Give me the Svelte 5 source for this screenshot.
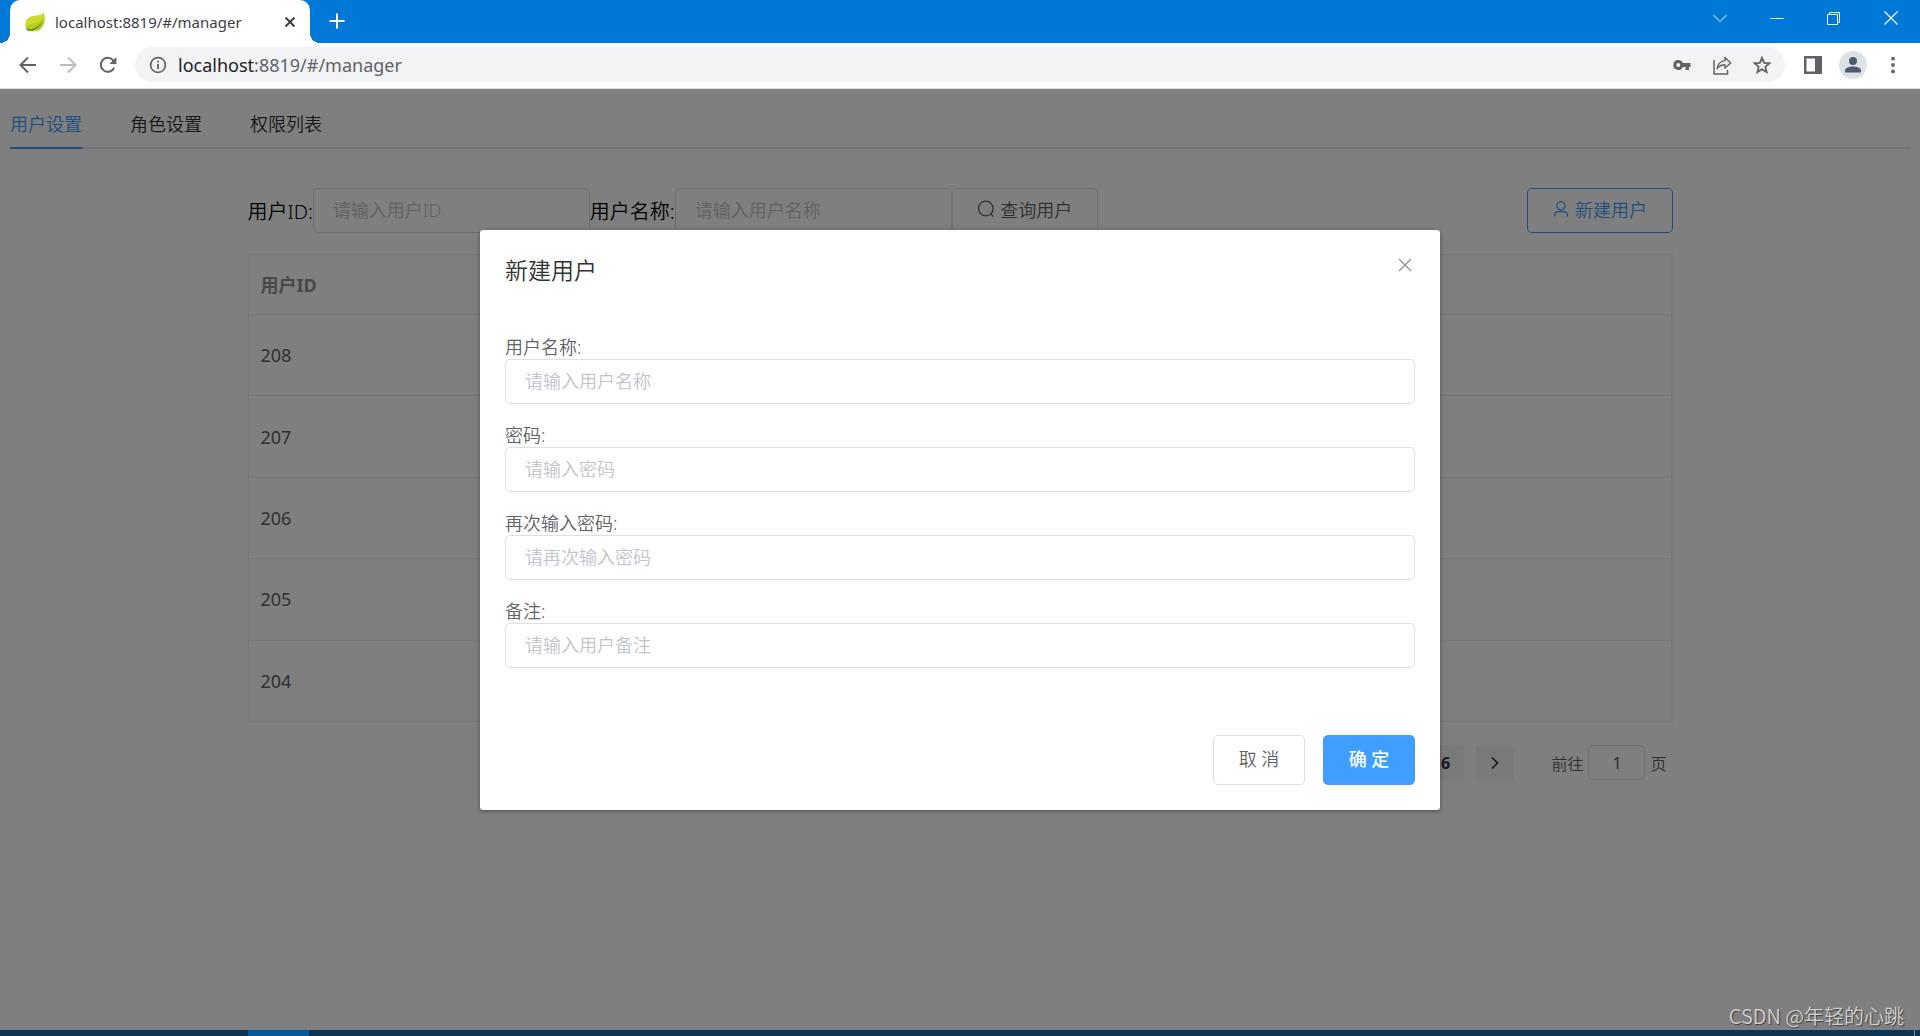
<script>
  const tabs = ['用户设置', '角色设置', '权限列表'];
  const rows = [208, 207, 206, 205, 204];
  const fields = [
    { id: 'name', label: '用户名称:', hint: '请输入用户名称', type: 'text' },
    { id: 'pwd', label: '密码:', hint: '请输入密码', type: 'password' },
    { id: 'pwd2', label: '再次输入密码:', hint: '请再次输入密码', type: 'password' },
    { id: 'remark', label: '备注:', hint: '请输入用户备注', type: 'text' }
  ];
  let active = $state(0);
  let pageNo = $state('1');
</script>

<div class="window">
  <header class="titlebar">
    <div class="browser-tab">
      <svg class="leaf" width="20" height="20" viewBox="0 0 20 20" aria-hidden="true">
        <path d="M18.6 0.6C17.6 3 14.6 3.5 10.5 3.8C4.6 4.3 0.4 7.4 0.4 12.4C0.4 15.4 1.6 17.6 3.2 18.4C7 20.2 13 19.6 16.4 16.2C20.4 12.2 20.2 5.6 18.6 0.6Z" fill="#b9cb1f" />
        <path d="M18.6 0.6C19 6.5 16.5 9.6 12 10.6C7 11.6 3.5 12.6 0.9 14.6C0.2 11 1.6 5 10.5 3.8C14.6 3.5 17.6 3 18.6 0.6Z" fill="#cddc2a" />
        <path d="M2.2 17.8C9 17.6 14.4 14.4 17.4 9C15.6 14.8 10.6 18.6 3.6 18.7Z" fill="#3f8f1c" />
        <circle cx="2.6" cy="17.4" r="1.1" fill="#4f9a24" />
      </svg>
      <span class="tab-title">localhost:8819/#/manager</span>
      <button class="tab-close" aria-label="关闭标签页">
        <svg width="12" height="12" viewBox="0 0 12 12"><path d="M1.5 1.5L10.5 10.5M10.5 1.5L1.5 10.5" stroke="#3c4043" stroke-width="2" /></svg>
      </button>
    </div>
    <button class="new-tab" aria-label="新标签页">
      <svg width="16" height="16" viewBox="0 0 16 16"><path d="M8 0.5V15.5M0.5 8H15.5" stroke="#fff" stroke-width="2" /></svg>
    </button>
    <div class="win-controls">
      <button aria-label="搜索标签页"><svg width="14" height="14" viewBox="0 0 14 14"><path d="M0.5 4L7 10.5L13.5 4" fill="none" stroke="#fff" stroke-width="1" /></svg></button>
      <button aria-label="最小化"><svg width="14" height="14" viewBox="0 0 14 14"><path d="M0.5 7.5H13.5" stroke="#fff" /></svg></button>
      <button aria-label="还原"><svg width="14" height="14" viewBox="0 0 14 14"><path d="M0.5 3.5H10.5V13.5H0.5ZM2.5 3V1.5H12.5V11.5H11" fill="none" stroke="#fff" /></svg></button>
      <button aria-label="关闭"><svg width="14" height="14" viewBox="0 0 14 14"><path d="M0.5 0.5L13.5 13.5M13.5 0.5L0.5 13.5" stroke="#fff" stroke-width="1.2" /></svg></button>
    </div>
  </header>

  <nav class="toolbar">
    <button class="tool" aria-label="后退"><svg width="18" height="18" viewBox="0 0 18 18"><path d="M17 9H2M9 1.5L1.5 9L9 16.5" fill="none" stroke="#5f6368" stroke-width="2" /></svg></button>
    <button class="tool" aria-label="前进"><svg width="18" height="18" viewBox="0 0 18 18"><path d="M1 9H16M9 1.5L16.5 9L9 16.5" fill="none" stroke="#babcbe" stroke-width="2" /></svg></button>
    <button class="tool" aria-label="刷新"><svg width="18" height="18" viewBox="0 0 18 18"><path d="M15.2 11.6A7 7 0 1 1 13.9 4L15.4 5.6" fill="none" stroke="#5f6368" stroke-width="2" /><path d="M17.4 1V8H10.4Z" fill="#5f6368" /></svg></button>
    <div class="omnibox">
      <svg width="18" height="18" viewBox="0 0 18 18" aria-hidden="true"><circle cx="9" cy="9" r="7.4" fill="none" stroke="#5f6368" stroke-width="1.7" /><path d="M9 8V13M9 4.8V6.6" stroke="#5f6368" stroke-width="1.8" /></svg>
      <span class="url"><span class="host">localhost</span>:8819/#/manager</span>
      <button class="tool" aria-label="密码"><svg width="18" height="18" viewBox="0 0 18 18"><path d="M5.3 4A5 5 0 1 0 9.9 11H12.5V14H16V11H17.5V7H9.9A5 5 0 0 0 5.3 4ZM5.3 7A2 2 0 1 1 5.3 11A2 2 0 0 1 5.3 7Z" fill="#5f6368" fill-rule="evenodd" /></svg></button>
      <button class="tool" aria-label="分享"><svg width="20" height="20" viewBox="0 0 20 20"><path d="M2 5V19H15.5V15" fill="none" stroke="#5f6368" stroke-width="1.5" /><path d="M13 2.5L18.7 8L13 13V9.8C9.5 9.8 7 11 5 13.8C5.6 9.5 8.2 6.2 13 5.6Z" fill="none" stroke="#5f6368" stroke-width="1.4" stroke-linejoin="round" /></svg></button>
      <button class="tool" aria-label="收藏"><svg width="20" height="20" viewBox="0 0 20 20"><path d="M10 2.8L12.1 7.8L17.5 8.3L13.4 11.8L14.6 17.1L10 14.3L5.4 17.1L6.6 11.8L2.5 8.3L7.9 7.8Z" fill="none" stroke="#5f6368" stroke-width="1.8" /></svg></button>
    </div>
    <button class="tool" aria-label="侧边栏"><svg width="18" height="18" viewBox="0 0 18 18"><path d="M0 0H18V18H0ZM2.5 2.5V15.5H11V2.5Z" fill="#5f6368" fill-rule="evenodd" /></svg></button>
    <button class="tool" aria-label="个人资料"><svg width="28" height="28" viewBox="0 0 28 28"><circle cx="14" cy="14" r="14" fill="#dee1e6" /><circle cx="14" cy="10" r="4" fill="#4d5b70" /><path d="M6 21.5V19.5C6 16.6 10.5 15.5 14 15.5S22 16.6 22 19.5V21.5Z" fill="#4d5b70" /></svg></button>
    <button class="tool" aria-label="更多"><svg width="18" height="18" viewBox="0 0 18 18" fill="#5f6368"><circle cx="9" cy="2.6" r="1.9" /><circle cx="9" cy="9" r="1.9" /><circle cx="9" cy="15.4" r="1.9" /></svg></button>
  </nav>

  <main class="page">
    <div class="tabs">
      {#each tabs as tab, i}
        <button class="tab" class:active={active === i} onclick={() => (active = i)}>{tab}</button>
      {/each}
    </div>

    <section class="content">
      <form class="search">
        <label for="q-id">用户ID:</label>
        <input class="field" id="q-id" placeholder="请输入用户ID" />
        <label for="q-name">用户名称:</label>
        <input class="field" id="q-name" placeholder="请输入用户名称" />
        <button type="button" class="btn">
          <svg width="18" height="18" viewBox="0 0 18 18" fill="none" stroke="currentColor" stroke-width="1.3"><circle cx="8.8" cy="8.5" r="7.3" /><path d="M13.8 13.8L16.4 16.6" /></svg>
          查询用户
        </button>
        <button type="button" class="btn plain">
          <svg width="18" height="18" viewBox="0 0 18 18" fill="none" stroke="currentColor" stroke-width="1.3"><circle cx="9" cy="5.8" r="4.1" /><path d="M2.6 16.5V15.2C2.6 12.8 4.4 11.6 6.6 11.6H11.4C13.6 11.6 15.4 12.8 15.4 15.2V16.5" /></svg>
          新建用户
        </button>
      </form>

      <table>
        <thead><tr><th>用户ID</th></tr></thead>
        <tbody>
          {#each rows as id}
            <tr><td>{id}</td></tr>
          {/each}
        </tbody>
      </table>

      <div class="pager">
        <button class="page-btn">6</button>
        <button class="page-btn" aria-label="下一页"><svg width="8" height="14" viewBox="0 0 8 14"><path d="M1 1.5L6.5 7L1 12.5" fill="none" stroke="#303133" stroke-width="1.7" /></svg></button>
        <label class="jump">前往 <input bind:value={pageNo} /> 页</label>
      </div>
    </section>

    <div class="mask">
      <div class="dialog" role="dialog" aria-labelledby="dlg-title">
        <div class="dialog-head">
          <h2 id="dlg-title">新建用户</h2>
          <button class="dialog-close" aria-label="关闭对话框"><svg width="14" height="14" viewBox="0 0 14 14"><path d="M1 1L13 13M13 1L1 13" stroke="#909399" stroke-width="1.4" /></svg></button>
        </div>
        <form class="dialog-body">
          {#each fields as f}
            <div class="item">
              <label for={f.id}>{f.label}</label>
              <input class="field" id={f.id} type={f.type} placeholder={f.hint} autocomplete="off" />
            </div>
          {/each}
        </form>
        <div class="dialog-foot">
          <button class="act">取 消</button>
          <button class="act primary">确 定</button>
        </div>
      </div>
    </div>
    <div class="watermark">CSDN @年轻的心跳</div>
  </main>

  <footer class="taskbar"><span class="task"></span><span class="edge"></span></footer>
</div>

<style>
  :global(body) {
    margin: 0;
    font-family: 'Noto Sans', 'Noto Sans CJK SC', sans-serif;
  }
  * { box-sizing: border-box; }
  button, input {
    font: inherit;
    color: inherit;
    margin: 0;
    padding: 0;
    border: 0;
    background: none;
    outline: none;
  }
  svg { display: block; flex: none; }
  .window {
    min-height: 100vh;
    display: flex;
    flex-direction: column;
    overflow: hidden;
    background: #fff;
  }

  .titlebar {
    display: flex;
    height: 43px;
    background: #0078d7;
  }
  .browser-tab {
    position: relative;
    display: flex;
    align-items: center;
    width: 300px;
    margin-left: 10px;
    padding: 0 14px 0 15px;
    background: #fff;
    border-radius: 10px 10px 0 0;
  }
  .browser-tab::before, .browser-tab::after {
    content: '';
    position: absolute;
    bottom: 0;
    width: 10px;
    height: 10px;
  }
  .browser-tab::before {
    right: 100%;
    background: radial-gradient(circle at 0 0, #0078d7 10px, #fff 10px);
  }
  .browser-tab::after {
    left: 100%;
    background: radial-gradient(circle at 100% 0, #0078d7 10px, #fff 10px);
  }
  .tab-title {
    flex: 1;
    margin-left: 10px;
    font-size: 15px;
    color: #3c4043;
  }
  .new-tab { display: flex; align-items: center; margin-left: 19px; padding-bottom: 1px; }
  .win-controls { display: flex; margin-left: auto; padding-right: 1px; }
  .win-controls button {
    display: flex;
    justify-content: center;
    width: 57px;
    padding-top: 11px;
  }

  .toolbar {
    display: flex;
    align-items: center;
    height: 46px;
    padding: 0 7px 2px 8px;
    border-bottom: 1px solid #dadce0;
  }
  .tool {
    display: flex;
    align-items: center;
    justify-content: center;
    width: 40px;
    height: 36px;
  }
  .omnibox {
    flex: 1;
    display: flex;
    align-items: center;
    height: 35px;
    margin: 0 8px 0 7px;
    padding: 0 3px 0 14px;
    border-radius: 18px;
    background: #f1f3f4;
  }
  .url {
    flex: 1;
    margin-left: 11px;
    font-size: 18px;
    color: #5f6368;
  }
  .host { color: #202124; }

  .page {
    flex: 1;
    position: relative;
    padding: 10px;
    font-size: 18px;
    font-weight: 350;
    color: #606266;
  }
  .tabs {
    display: flex;
    gap: 48px;
    height: 50px;
    border-bottom: 2px solid #e4e7ed;
  }
  .tab {
    height: 50px;
    color: #303133;
    border-bottom: 2px solid transparent;
  }
  .tab.active { color: #409eff; border-color: #409eff; }

  .content { width: 75%; margin: 39px auto 0; }
  .search { display: flex; align-items: center; }
  .search label { font-size: 20px; color: #000; white-space: nowrap; }
  .search .field { width: 277px; }
  .field {
    width: 100%;
    height: 45px;
    padding: 0 19px 2px;
    border: 1px solid #dcdfe6;
    border-radius: 5px;
    font-size: 18px;
  }
  .field::placeholder { color: #c0c4cc; opacity: 1; }
  .btn {
    display: flex;
    align-items: center;
    justify-content: center;
    gap: 5px;
    width: 146px;
    height: 45px;
    padding-bottom: 4px;
    border: 1px solid #dcdfe6;
    border-radius: 5px;
  }
  .plain { margin-left: auto; color: #409eff; border-color: #409eff; }

  table {
    width: 100%;
    height: 468px;
    margin-top: 21px;
    border-spacing: 0;
    border: solid #ebeef5;
    border-width: 1px 2px 0 1px;
  }
  th, td {
    padding: 0 12px;
    text-align: left;
    font-weight: 400;
    border-bottom: 1px solid #ebeef5;
  }
  th { height: 60px; padding-bottom: 2px; color: #909399; font-weight: 700; }

  .pager {
    display: flex;
    align-items: center;
    justify-content: flex-end;
    gap: 12px;
    margin-top: 23px;
    padding-right: 6px;
    font-size: 16px;
  }
  .page-btn {
    display: flex;
    align-items: center;
    justify-content: center;
    width: 38px;
    height: 35px;
    border-radius: 3px;
    background: #f4f4f5;
    color: #303133;
    font-weight: 700;
  }
  .jump {
    display: flex;
    align-items: center;
    gap: 5px;
    margin-left: 25px;
  }
  .jump input {
    width: 57px;
    height: 35px;
    border: 1px solid #dcdfe6;
    border-radius: 5px;
    text-align: center;
    font-weight: 400;
  }

  .mask {
    position: absolute;
    inset: 0;
    padding-top: 141px;
    background: rgba(0, 0, 0, 0.5);
  }
  .dialog {
    width: 50%;
    margin: 0 auto;
    padding: 25px;
    background: #fff;
    border-radius: 3px;
    box-shadow: 0 1px 4px rgba(0, 0, 0, 0.4);
  }
  .dialog-head {
    display: flex;
    justify-content: space-between;
    align-items: flex-start;
  }
  h2 {
    margin: 0;
    font-size: 23px;
    line-height: 30px;
    font-weight: 350;
    color: #303133;
  }
  .dialog-close { padding: 3px; }
  .dialog-body {
    display: flex;
    flex-direction: column;
    gap: 20px;
    margin-top: 51px;
  }
  .item label { display: block; line-height: 23px; }
  .item .field { display: block; }
  .dialog-foot {
    display: flex;
    justify-content: flex-end;
    gap: 18px;
    margin-top: 67px;
  }
  .act {
    width: 92px;
    height: 50px;
    padding-bottom: 4px;
    border: 1px solid #dcdfe6;
    border-radius: 5px;
  }
  .primary {
    background: #409eff;
    border-color: #409eff;
    color: #fff;
    font-weight: 500;
  }
  .watermark {
    position: absolute;
    right: 16px;
    bottom: 0;
    font: 350 20px/28px 'Noto Sans CJK SC', sans-serif;
    color: #d0d0d0;
    text-shadow: 1px 1px 1px #404040;
  }

  .taskbar { display: flex; height: 6px; background: #0d3553; }
  .task { width: 61px; margin-left: 248px; background: #065a9c; }
  .edge { width: 1px; margin: 0 5px 0 auto; background: #7a8d9b; }
</style>
